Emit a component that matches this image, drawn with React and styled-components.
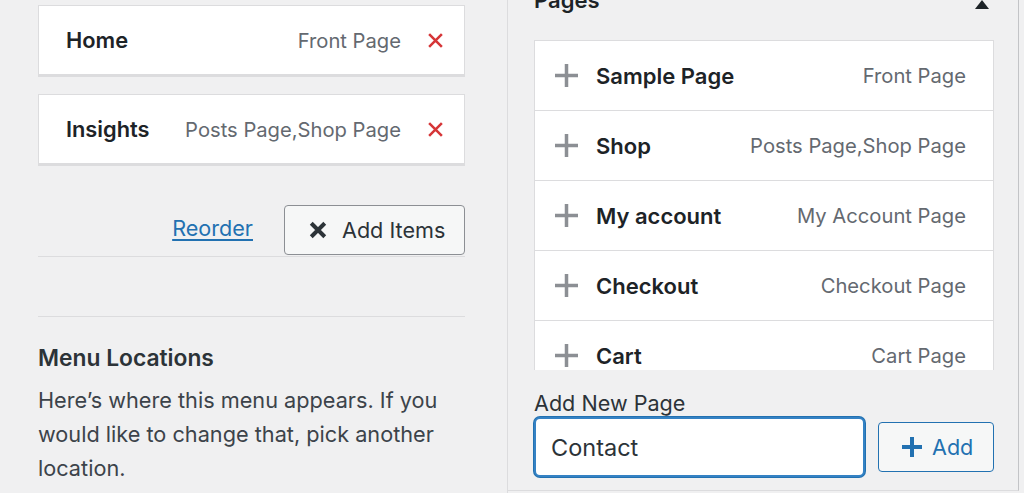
import React from "react";
import styled, { createGlobalStyle } from "styled-components";

const Global = createGlobalStyle`
  html, body {
    margin: 0;
    padding: 0;
    background: #f0f0f1;
    font-family: Inter, "Noto Sans", "Liberation Sans", sans-serif;
    overflow: hidden;
  }
`;

const Page = styled.div`
  display: flex;
  width: 1024px;
  height: 493px;
  overflow: hidden;
  background: #f0f0f1;
`;

const LeftCol = styled.div`
  width: 508px;
  flex: none;
  border-right: 1px solid #dcdcde;
  padding: 5px 0 0 38px;
  box-sizing: border-box;
`;

const LeftInner = styled.div`
  width: 427px;
`;

const MenuItem = styled.div`
  display: flex;
  align-items: center;
  height: 70px;
  box-sizing: border-box;
  background: #fff;
  border: 1px solid #dcdcde;
  box-shadow: 0 2px 0 #dcdcde;
  padding: 0 20px 0 27px;
  margin-bottom: 19px;
`;

const ItemTitle = styled.span`
  font-weight: 600;
  font-size: 21.8px;
  color: #1d2327;
  flex: 1;
`;

const ItemMeta = styled.span`
  font-size: 20.2px;
  color: #646970;
  margin-right: 26px;
`;

const RemoveIcon = styled.svg`
  width: ${(p) => p.$size}px;
  height: ${(p) => p.$size}px;
  display: block;
  flex: none;
`;

const Actions = styled.div`
  display: flex;
  justify-content: flex-end;
  align-items: center;
  gap: 31px;
  margin-top: 41px;
  padding-bottom: 1px;
  border-bottom: 1px solid #dcdcde;
`;

const LinkText = styled.a`
  font-size: 21.6px;
  color: #2271b1;
  text-decoration: underline;
  text-underline-offset: 3px;
  margin-bottom: 4px;
`;

const GrayButton = styled.button`
  display: flex;
  align-items: center;
  gap: 15px;
  height: 50px;
  width: 181px;
  box-sizing: border-box;
  padding: 0 0 0 24px;
  background: #f6f7f7;
  border: 1px solid #8c8f94;
  border-radius: 4px;
  font-family: inherit;
  font-size: 21.6px;
  color: #2c3338;
`;

const Divider = styled.div`
  height: 1px;
  background: #dcdcde;
  margin-top: 59px;
`;

const SectionTitle = styled.h3`
  margin: 27px 0 0;
  font-size: 22.8px;
  font-weight: 600;
  color: #2c3338;
  line-height: 28px;
`;

const Desc = styled.p`
  margin: 11px 0 0;
  font-size: 21.7px;
  line-height: 34px;
  color: #3c434a;
`;

const RightCol = styled.div`
  width: 511px;
  flex: none;
  border-right: 1px solid #c3c4c7;
  border-bottom: 1px solid #dcdcde;
  height: 491px;
  padding: 0 0 0 26px;
  box-sizing: border-box;
`;

const RightInner = styled.div`
  width: 460px;
`;

const PanelHead = styled.div`
  display: flex;
  justify-content: space-between;
  align-items: center;
  height: 30px;
  margin-top: -15px;
  padding-right: 5px;
`;

const PanelTitle = styled.h3`
  margin: 0;
  font-size: 22px;
  font-weight: 600;
  color: #1d2327;
`;

const Caret = styled.span`
  width: 0;
  height: 0;
  border-left: 7px solid transparent;
  border-right: 7px solid transparent;
  border-bottom: 9px solid #1d2327;
  margin-top: 8px;
`;

const List = styled.div`
  margin-top: 25px;
  height: 330px;
  overflow: hidden;
  background: #fff;
  border: 1px solid #dcdcde;
  border-bottom: none;
  box-sizing: border-box;
`;

const Row = styled.div`
  display: flex;
  align-items: center;
  height: 70px;
  box-sizing: border-box;
  border-bottom: 1px solid #dcdcde;
  padding: 0 27px 0 19px;
  flex: none;
`;

const PlusIcon = styled.svg`
  width: 25px;
  height: 25px;
  display: block;
  margin-right: 17px;
  flex: none;
`;

const RowTitle = styled.span`
  flex: 1;
  font-size: 22px;
  font-weight: 600;
  color: #1d2327;
`;

const RowMeta = styled.span`
  font-size: 20.2px;
  color: #646970;
`;

const Label = styled.label`
  display: block;
  margin-top: 20px;
  font-size: 21.6px;
  color: #2c3338;
  line-height: 26px;
`;

const FormRow = styled.div`
  display: flex;
  align-items: center;
  gap: 13px;
  margin-top: 1px;
`;

const TextInput = styled.input`
  width: 331px;
  height: 60px;
  box-sizing: border-box;
  border: 2px solid #3582c4;
  border-radius: 6px;
  padding: 0 15px;
  font-family: inherit;
  font-size: 23.5px;
  color: #2c3338;
  outline: none;
  box-shadow: 0 0 0 1px #2271b1;
`;

const BlueButton = styled.button`
  display: flex;
  align-items: center;
  gap: 9px;
  width: 116px;
  height: 50px;
  box-sizing: border-box;
  padding: 0 0 0 22px;
  background: #f6f7f7;
  border: 1px solid #2271b1;
  border-radius: 4px;
  font-family: inherit;
  font-size: 21.6px;
  color: #2271b1;
`;

const Cross = ({ color, w, size }) => (
  <RemoveIcon $size={size} viewBox="0 0 20 20">
    <path d="M2.5 2.5 L17.5 17.5 M17.5 2.5 L2.5 17.5" stroke={color} strokeWidth={w} />
  </RemoveIcon>
);

const menuItems = [
  { title: "Home", meta: "Front Page" },
  { title: "Insights", meta: "Posts Page,Shop Page" },
];

const pages = [
  { title: "Sample Page", meta: "Front Page" },
  { title: "Shop", meta: "Posts Page,Shop Page" },
  { title: "My account", meta: "My Account Page" },
  { title: "Checkout", meta: "Checkout Page" },
  { title: "Cart", meta: "Cart Page" },
];

export default function App() {
  return (
    <Page>
      <Global />
      <LeftCol>
        <LeftInner>
          {menuItems.map((it) => (
            <MenuItem key={it.title}>
              <ItemTitle>{it.title}</ItemTitle>
              <ItemMeta>{it.meta}</ItemMeta>
              <Cross color="#d63638" w={3} size={17} />
            </MenuItem>
          ))}
          <Actions>
            <LinkText href="#">Reorder</LinkText>
            <GrayButton>
              <Cross color="#2c3338" w={4.5} size={18} />
              Add Items
            </GrayButton>
          </Actions>
          <Divider />
          <SectionTitle>Menu Locations</SectionTitle>
          <Desc>
            Here’s where this menu appears. If you would like to change that, pick another
            location.
          </Desc>
        </LeftInner>
      </LeftCol>
      <RightCol>
        <RightInner>
          <PanelHead>
            <PanelTitle>Pages</PanelTitle>
            <Caret />
          </PanelHead>
          <List>
            {pages.map((p) => (
              <Row key={p.title}>
                <PlusIcon viewBox="0 0 25 25">
                  <path d="M12.5 1 V24 M1 12.5 H24" stroke="#8c8f94" strokeWidth="3.5" />
                </PlusIcon>
                <RowTitle>{p.title}</RowTitle>
                <RowMeta>{p.meta}</RowMeta>
              </Row>
            ))}
          </List>
          <Label>Add New Page</Label>
          <FormRow>
            <TextInput defaultValue="Contact" />
            <BlueButton>
              <svg width="22" height="22" viewBox="0 0 22 22">
                <path d="M11 1 V21 M1 11 H21" stroke="#2271b1" strokeWidth="4" />
              </svg>
              Add
            </BlueButton>
          </FormRow>
        </RightInner>
      </RightCol>
    </Page>
  );
}
